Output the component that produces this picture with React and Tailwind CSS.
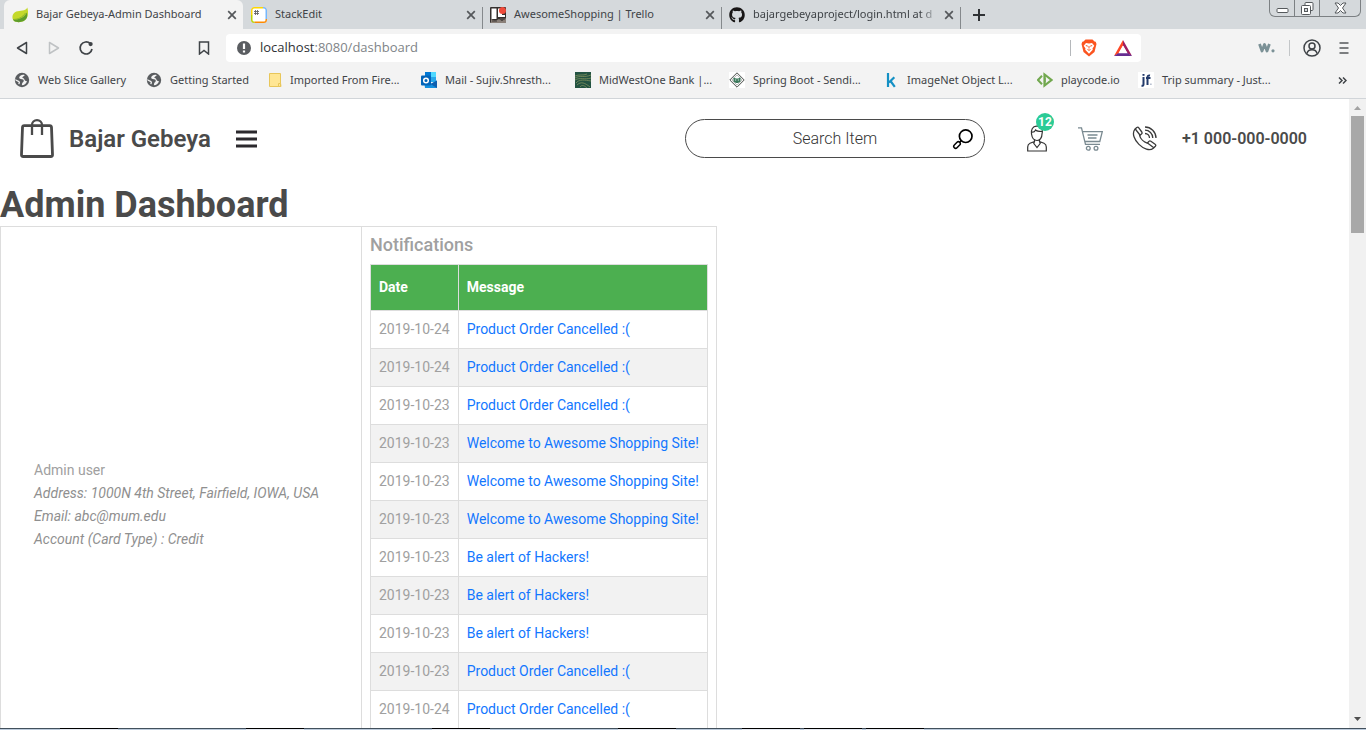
import React from "react";
import { FaGithub } from "react-icons/fa";

const TABS = [
  { title: "Bajar Gebeya-Admin Dashboard", icon: LeafIcon, active: true },
  { title: "StackEdit", icon: StackEditIcon },
  { title: "AwesomeShopping | Trello", icon: TrelloIcon },
  { title: "bajargebeyaproject/login.html at d", icon: GithubIcon, faded: true },
];

const BOOKMARKS = [
  { title: "Web Slice Gallery", icon: GlobeIcon, width: "w-[132px]" },
  { title: "Getting Started", icon: GlobeIcon, width: "w-[120px]" },
  { title: "Imported From Fire...", icon: FolderIcon, width: "w-[155px]" },
  { title: "Mail - Sujiv.Shresth...", icon: OutlookIcon, width: "w-[154px]" },
  { title: "MidWestOne Bank |...", icon: BankIcon, width: "w-[154px]" },
  { title: "Spring Boot - Sendi...", icon: BaeldungIcon, width: "w-[154px]" },
  { title: "ImageNet Object L...", icon: KaggleIcon, width: "w-[154px]" },
  { title: "playcode.io", icon: PlaycodeIcon, width: "w-[101px]" },
  { title: "Trip summary - Just...", icon: JustFlyIcon, width: "w-[150px]" },
];

const CANCELLED = "Product Order Cancelled :(";
const WELCOME = "Welcome to Awesome Shopping Site!";
const ALERT = "Be alert of Hackers!";

const NOTIFICATIONS = [
  ["2019-10-24", CANCELLED],
  ["2019-10-24", CANCELLED],
  ["2019-10-23", CANCELLED],
  ["2019-10-23", WELCOME],
  ["2019-10-23", WELCOME],
  ["2019-10-23", WELCOME],
  ["2019-10-23", ALERT],
  ["2019-10-23", ALERT],
  ["2019-10-23", ALERT],
  ["2019-10-23", CANCELLED],
  ["2019-10-24", CANCELLED],
];

function LeafIcon() {
  return (
    <svg width="16" height="16" viewBox="0 0 16 16" className="shrink-0">
      <path d="M15.3 0.6C14.6 2 13.6 2.9 12 3.2 8 4 3 3.400 1 7.500 -0.300 10.500 0.500 14 4 14.800 8 15.800 12.500 14.600 14.600 11.300 16.500 8 16.300 4 15.300 0.600Z" fill="#c4d92b" />
      <path d="M14.600 11.300C12.500 14.600 8 15.800 4 14.800 2.500 14.500 1.500 13.600 1 12.500 6 12.800 11.500 11.500 14.800 5.500 15.500 8 15.300 10 14.600 11.300Z" fill="#5f9e2b" />
      <path d="M1 12.500C6 12.500 10.500 10.500 13.500 6" fill="none" stroke="#8cb82a" strokeWidth="1" />
    </svg>
  );
}

function StackEditIcon() {
  return (
    <svg width="16" height="16" viewBox="0 0 16 16" className="shrink-0">
      <path d="M1 8V3.500A2.500 2.500 0 0 1 3.500 1H12" fill="none" stroke="#ffd700" strokeWidth="2" />
      <path d="M12 1h0.500A2.500 2.500 0 0 1 15 3.500V12" fill="none" stroke="#75b7fd" strokeWidth="2" />
      <path d="M15 12v0.500A2.500 2.500 0 0 1 12.500 15H3.500" fill="none" stroke="#ff8a00" strokeWidth="2" />
      <path d="M3.500 15A2.500 2.500 0 0 1 1 12.500V8" fill="none" stroke="#bbd500" strokeWidth="2" />
      <rect x="1.500" y="1.500" width="13" height="13" rx="1.500" fill="#fff" />
      <path d="M4.500 3v5M6.500 3v5M3 4.500h5M3 6.500h5" stroke="#666" strokeWidth="0.900" />
    </svg>
  );
}

function TrelloIcon() {
  return (
    <svg width="16" height="16" viewBox="0 0 16 16" className="shrink-0">
      <rect width="16" height="16" rx="1" fill="#35302e" />
      <path d="M1 12l4 2 4-2 3 2 4-3v5H1z" fill="#8a8079" />
      <rect x="1.500" y="1.500" width="5" height="10.500" fill="#fff" />
      <path d="M8 1.500h4V8h3v2H8z" fill="#fff" />
      <path d="M10 12h5M2 14h5" stroke="#5a524d" strokeWidth="1.500" />
      <circle cx="12.500" cy="3.500" r="3.500" fill="#ef4b3b" />
    </svg>
  );
}

function GithubIcon() {
  return <FaGithub size={16} className="shrink-0 text-[#181616]" />;
}

function GlobeIcon() {
  return (
    <svg width="16" height="16" viewBox="0 0 16 16" className="shrink-0">
      <circle cx="8" cy="8" r="7.200" fill="#5a5d60" />
      <path d="M10.800 3.200C8.500 2.300 6 3.300 5.200 5.300 5 6.800 6.500 7.200 8 7.300c1.800 0.200 2.300 1.500 1.300 2.600-1.100 0.800-1.300 1.400-1.400 3.300 2.600-0.100 4.600-1.800 5-4.300-1.200 0.300-2.300-0.500-2.600-1.700-0.200-1-1.200-1.200-2-1.500 0.300-1.200 1.300-1.400 2.500-2.500Z" fill="#f3f3f3" />
      <path d="M1.500 7.500c1 1.600 3 1.300 3.800 2.600 0.200 0.800-0.300 1.300-0.500 2" fill="none" stroke="#f3f3f3" strokeWidth="1.300" />
    </svg>
  );
}

function FolderIcon() {
  return (
    <svg width="16" height="16" viewBox="0 0 16 16" className="shrink-0">
      <path d="M3.500 1.500h11v9.500l0.500 3.500h-11.500z" fill="#ffe694" stroke="#e8c65a" />
      <path d="M12.500 11.500h2v3h-2z" fill="#ffe694" stroke="#e8c65a" />
    </svg>
  );
}

function OutlookIcon() {
  return (
    <svg width="16" height="16" viewBox="0 0 16 16" className="shrink-0">
      <rect x="4" y="0" width="11" height="10" fill="#28a8ea" />
      <rect x="4" y="0" width="6" height="5" fill="#0078d4" />
      <rect x="10" y="0" width="5" height="5" fill="#50d9ff" />
      <path d="M3 8.500l6.500 3.500L16 8.500V16H4z" fill="#1490df" />
      <path d="M9.500 12L16 16V8.500z" fill="#0f5fae" />
      <rect x="0" y="3.500" width="10" height="10" rx="1" fill="#0364b8" />
      <circle cx="5" cy="8.500" r="2.300" fill="none" stroke="#fff" strokeWidth="1.500" />
    </svg>
  );
}

function BankIcon() {
  return (
    <svg width="16" height="16" viewBox="0 0 16 16" className="shrink-0">
      <rect width="16" height="16" fill="#235342" />
      <path d="M0 6c5-3 9 0 16-3M0 8c5-3 10 0 16-2M1 11c3-4 9-3 15-2M2 13c4-4 8-2 13 2M5 15c2-3 5-1 7 1M0 4c4-2 8 0 12-2" fill="none" stroke="#8d9a62" strokeWidth="0.700" />
    </svg>
  );
}

function BaeldungIcon() {
  return (
    <svg width="16" height="16" viewBox="0 0 16 16" className="shrink-0">
      <rect width="16" height="16" fill="#fff" />
      <path d="M8 0.800L15.200 8 8 15.200 0.800 8Z" fill="#fff" stroke="#4b4f4c" strokeWidth="1" />
      <path d="M8 2.800L13.200 8 8 13.200 2.800 8Z" fill="none" stroke="#777" strokeWidth="0.600" />
      <path d="M4.500 5.500L7 6.500h2l2.500-1v4L9 11H7L4.500 9.500Z" fill="#3c7a5c" />
      <path d="M6 8h1.200M8.800 8H10" stroke="#d9e6df" strokeWidth="1" />
    </svg>
  );
}

function KaggleIcon() {
  return (
    <svg width="16" height="16" viewBox="0 0 16 16" className="shrink-0">
      <path d="M5 1v14M11.300 5.200L6 10.500M7.500 9l4.300 5.800" fill="none" stroke="#1490c4" strokeWidth="2.200" />
    </svg>
  );
}

function PlaycodeIcon() {
  return (
    <svg width="16" height="16" viewBox="0 0 16 16" className="shrink-0">
      <path d="M5 3.800L1 8l4 4.200" fill="none" stroke="#72a84f" strokeWidth="2" />
      <path d="M7.500 2.500v11L14.500 8Z" fill="none" stroke="#72a84f" strokeWidth="2.200" />
      <path d="M8 5.500v5" stroke="#72a84f" strokeWidth="1.500" />
    </svg>
  );
}

function JustFlyIcon() {
  return (
    <svg width="16" height="16" viewBox="0 0 16 16" className="shrink-0">
      <rect width="16" height="16" fill="#fff" />
      <path d="M5.500 5v7.500q0 1.500-2 1.300M8 6h4.500M9.500 13V5.500q0-2.500 2.500-2" fill="none" stroke="#223a6b" strokeWidth="2" />
      <rect x="4.500" y="2" width="2" height="1.800" fill="#223a6b" />
      <rect x="12.300" y="11.500" width="1.200" height="1.500" fill="#9aa6bd" />
    </svg>
  );
}

function CloseIcon() {
  return (
    <svg width="10" height="10" viewBox="0 0 10 10" className="shrink-0">
      <path d="M1.200 1.200l7.600 7.600M8.800 1.200L1.200 8.800" stroke="#55585b" strokeWidth="1.700" />
    </svg>
  );
}

function Tab({ title, icon: Icon, active, faded }) {
  return (
    <div
      className={
        "flex h-[29px] w-[239px] items-center pl-2 " +
        (active ? "rounded-t-md bg-[#f3f3f3]" : "")
      }
    >
      <Icon />
      <span
        className={
          "ml-2 w-[186px] whitespace-nowrap text-[#3f4347] " +
          (faded ? "mask-r-from-90% mask-r-to-100%" : "")
        }
      >
        {title}
      </span>
      <button aria-label={"Close " + title} className="ml-[5px]">
        <CloseIcon />
      </button>
      {!active && <span className="-mr-px ml-auto mt-auto h-[22px] w-px bg-[#85898c]" />}
    </div>
  );
}

function WindowControls() {
  return (
    <div className="ml-auto mr-[5px] flex h-[17px] self-start rounded-b-md border border-t-0 border-[#7c8083]">
      <button aria-label="Minimize" className="flex w-[25px] items-center justify-center border-r border-[#7c8083]">
        <svg width="13" height="13" viewBox="0 0 13 13">
          <rect x="1" y="6.500" width="11" height="4" rx="1" fill="#fff" stroke="#55595c" />
        </svg>
      </button>
      <button aria-label="Restore" className="flex w-[25px] items-center justify-center border-r border-[#7c8083]">
        <svg width="13" height="13" viewBox="0 0 13 13">
          <rect x="4" y="0.500" width="8" height="8" rx="1" fill="#fff" stroke="#55595c" />
          <rect x="0.500" y="3.500" width="9" height="9" rx="1" fill="#fff" stroke="#55595c" />
          <rect x="3.500" y="6.500" width="3" height="3" fill="#d5d9dc" stroke="#55595c" />
        </svg>
      </button>
      <button aria-label="Close window" className="flex w-[40px] items-center justify-center">
        <svg width="13" height="12" viewBox="0 0 13 12">
          <path d="M1 1h3l2.500 2.500L9 1h3L8.500 6l3.500 5H9L6.500 8.500 4 11H1l3.500-5Z" fill="#fff" stroke="#55595c" />
        </svg>
      </button>
    </div>
  );
}

function Toolbar() {
  return (
    <div className="flex h-[38px] items-center">
      <nav aria-label="Browser" className="flex w-[226px] items-center pl-[15px]">
        <button aria-label="Back">
          <svg width="14" height="16" viewBox="0 0 14 16">
            <path d="M11.500 2.500v11L2.500 8Z" fill="none" stroke="#3f4347" strokeWidth="1.500" strokeLinejoin="round" />
          </svg>
        </button>
        <button aria-label="Forward" className="ml-[18px]">
          <svg width="14" height="16" viewBox="0 0 14 16">
            <path d="M2.500 2.500v11L11.500 8Z" fill="none" stroke="#bfc2c4" strokeWidth="1.500" strokeLinejoin="round" />
          </svg>
        </button>
        <button aria-label="Reload" className="ml-[17px]">
          <svg width="16" height="16" viewBox="0 0 16 16">
            <path d="M12.300 3.700A6 6 0 1 0 14 9" fill="none" stroke="#3f4347" strokeWidth="1.700" />
            <circle cx="12.600" cy="4.100" r="2.100" fill="#3f4347" />
          </svg>
        </button>
        <button aria-label="Bookmark this page" className="ml-auto mr-4">
          <svg width="12" height="14" viewBox="0 0 12 14">
            <path d="M1.500 1h9v12L6 9.500 1.500 13Z" fill="none" stroke="#3f4347" strokeWidth="1.500" />
          </svg>
        </button>
      </nav>
      <div className="flex h-7 flex-1 items-center rounded bg-white pl-[11px] pr-[9px]">
        <svg width="14" height="14" viewBox="0 0 14 14" className="shrink-0">
          <circle cx="7" cy="7" r="7" fill="#5a5d61" />
          <path d="M7 2.500v5.500M7 9.500v2" stroke="#fff" strokeWidth="2.200" />
        </svg>
        <p className="ml-[9px] flex-1 font-['Open_Sans',sans-serif] text-[13px] text-[#808488]">
          <span className="text-[#2f3235]">localhost</span>:8080/dashboard
        </p>
        <span className="h-4 w-px bg-[#b5b8bb]" />
        <button aria-label="Brave shields" className="ml-[10px]">
          <svg width="16" height="18" viewBox="0 0 16 18">
            <path d="M4.500 0.500h7L13.500 2.500l1.200 0.200L15.500 5l-2 8L8 17.500 2.500 13l-2-8 0.800-2.300L2.500 2.500Z" fill="#fb5420" />
            <path d="M5 4l3 0.600L11 4l2.300 2.700-1.800 2.800 0.300 1.300L8 14.700l-3.800-3.900 0.300-1.300L2.700 6.700Z" fill="#fff" />
            <path d="M4.800 6.500l2 0.700M11.200 6.500l-2 0.700M8 7v2.500M6.500 10.500L8 11.300l1.500-0.800" fill="none" stroke="#fb5420" strokeWidth="1" />
          </svg>
        </button>
        <button aria-label="Brave rewards" className="ml-[17px]">
          <svg width="18" height="16" viewBox="0 0 18 16">
            <path d="M9 0L0 16 4.500 13.500 9 5.500Z" fill="#ff4724" />
            <path d="M9 0L18 16 13.500 13.500 9 5.500Z" fill="#9e1f63" />
            <path d="M0 16h18L13.500 13H4.500Z" fill="#662d91" />
            <path d="M9 5.500L4.500 13.200h9Z" fill="#fff" />
          </svg>
        </button>
      </div>
      <div className="flex w-[225px] items-center pl-[117px]">
        <button aria-label="Extension" className="h-6">
          <svg width="17" height="10" viewBox="0 0 17 10">
            <path d="M1.500 1L4 8 6.500 1.500 9 8l2.400-7" fill="none" stroke="#7b9196" strokeWidth="2.800" strokeLinejoin="round" />
            <circle cx="15" cy="7.800" r="1.600" fill="#7b9196" />
          </svg>
        </button>
        <span className="ml-[14px] h-4 w-px bg-[#c3c6c8]" />
        <button aria-label="Profile" className="ml-[13px]">
          <svg width="18" height="18" viewBox="0 0 18 18" fill="none" stroke="#3f4347" strokeWidth="1.500">
            <circle cx="9" cy="9" r="8" />
            <circle cx="9" cy="7" r="3" />
            <path d="M4 14.500c0.500-2.500 2.500-3.700 5-3.700s4.500 1.200 5 3.700" />
          </svg>
        </button>
        <button aria-label="Menu" className="ml-[18px]">
          <svg width="10" height="12" viewBox="0 0 10 12">
            <path d="M0.500 1h9M0.500 6h9M0.500 11h9" stroke="#55585b" strokeWidth="1.700" />
          </svg>
        </button>
      </div>
    </div>
  );
}

function BookmarksBar() {
  return (
    <nav aria-label="Bookmarks" className="flex h-[32px] items-center border-b border-[#d1d5d9] pb-[5px] pl-[14px]">
      {BOOKMARKS.map(({ title, icon: Icon, width }) => (
        <a key={title} href="#bookmark" className={"flex shrink-0 items-center gap-2 whitespace-nowrap text-[#3f4347] " + width}>
          <Icon />
          {title}
        </a>
      ))}
      <button aria-label="More bookmarks" className="ml-auto mr-[19px]">
        <svg width="9" height="7" viewBox="0 0 9 7">
          <path d="M1 0.500l3 3-3 3M5 0.500l3 3-3 3" fill="none" stroke="#3f4347" strokeWidth="1.500" />
        </svg>
      </button>
    </nav>
  );
}

function SiteHeader() {
  return (
    <header className="flex h-[79px] items-center pl-5 pr-[42px] text-[#4a4a4a]">
      <a href="#home" className="flex items-center gap-[15px] text-2xl font-semibold">
        <svg width="34" height="39" viewBox="0 0 34 39" fill="none" stroke="#4a4a4a" strokeWidth="2.800">
          <path d="M4.300 6.600h25.400q1.700 0 1.800 1.700L32.500 35.500q0.100 2-1.700 2H3.200q-1.800 0-1.700-2L2.500 8.300q0.100-1.700 1.800-1.700Z" />
          <path d="M12 16V6a5 4.800 0 0 1 10 0V16" strokeWidth="2.300" />
        </svg>
        Bajar Gebeya
      </a>
      <button aria-label="Open menu" className="ml-[25px]">
        <svg width="21" height="18" viewBox="0 0 21 18">
          <path d="M0 2h21M0 9h21M0 16h21" stroke="#2b292d" strokeWidth="3" />
        </svg>
      </button>
      <form role="search" className="ml-auto flex h-[39px] w-[300px] items-center rounded-full border border-[#4a4a4a] px-[10px]">
        <input
          type="text"
          aria-label="Search Item"
          placeholder="Search Item"
          className="ml-[22px] min-w-0 flex-1 bg-transparent text-center text-base font-light outline-none placeholder:text-[#333333]"
        />
        <button type="button" aria-label="Search">
          <svg width="22" height="22" viewBox="0 0 22 22" fill="none" stroke="#000">
            <circle cx="13.700" cy="8.200" r="6.300" strokeWidth="1.700" />
            <path d="M9.300 12.700L7.500 14.500" strokeWidth="1.700" />
            <rect x="-1.900" y="-3.800" width="3.800" height="7.600" rx="1.900" strokeWidth="1.500" transform="translate(5 17) rotate(45)" />
          </svg>
        </button>
      </form>
      <a href="#account" aria-label="Account" className="relative ml-[42px]">
        <svg width="20" height="27" viewBox="0 0 20 27" fill="none" stroke="#333" strokeWidth="1.200">
          <path d="M4.500 9C4 4.500 5.500 1.500 9.500 1.200c4-0.200 6 2.300 5.900 5.300L15 9c0 3.500-2 6.500-5 6.500S5 12.500 4.500 9Z" />
          <path d="M5 7c2.500 0.300 3-1 3.500-2 1.500 1.500 4 1.500 6.500 1.500" />
          <path d="M7.500 14.500v2L3 18.200Q0.700 19.200 0.700 22v4h18.600v-4q0-2.800-2.300-3.800l-4.500-1.700v-2M7.500 16.500L6.800 18.500 10 22.500l3.200-4-0.700-2" />
        </svg>
        <span className="absolute -top-[12px] left-[9px] flex size-[18px] items-center justify-center rounded-full bg-[#2bcb96] text-xs font-bold text-white">
          12
        </span>
      </a>
      <a href="#cart" aria-label="Cart" className="ml-[31px]">
        <svg width="25" height="24" viewBox="0 0 25 24" fill="none" stroke="#7a8a91" strokeWidth="1.300">
          <path d="M0 0.800h3.500L7.500 17.300H22M4.500 4.700H24.300L21.800 14.500H7M9.500 8h10M10 11h8.500" />
          <circle cx="10.300" cy="21.300" r="1.900" />
          <circle cx="18" cy="21.300" r="1.900" />
        </svg>
      </a>
      <a href="tel:+10000000000" className="ml-[29px] flex items-center gap-[25px] text-base font-semibold">
        <svg width="25" height="25" viewBox="0 0 25 25" fill="none" stroke="#3b3b3b" strokeWidth="1.300" strokeLinejoin="round">
          <path d="M2.800 3.300L4.800 1.500q1.200-0.800 2 0.300l3 4.200q0.700 1.200-0.300 2L7.600 9.500c0.800 3.200 4.200 6.600 7.600 7.700l1.700-1.800q0.900-0.900 2-0.200l4.200 3q1.200 0.900 0.300 2L21.300 22.300C14 28.500-3.500 12 2.800 3.300Z" />
          <path d="M3.300 3l5 6.500M15.500 17l6.300 4.800" />
          <path d="M13 1c6 0 11 5 11 11M13 4.200c4.300 0 7.800 3.500 7.800 7.800M13 7.500c2.500 0 4.500 2 4.500 4.500" />
        </svg>
        +1 000-000-0000
      </a>
    </header>
  );
}

function ProfilePane() {
  return (
    <section aria-label="Profile" className="flex w-[361px] items-center border-r border-[#dddddd] pl-[33px] leading-[23px]">
      <div>
        <p>Admin user</p>
        <address className="whitespace-nowrap text-[#8f8f8f]">
          Address: 1000N 4th Street, Fairfield, IOWA, USA
          <br />
          Email: abc@mum.edu
          <br />
          Account (Card Type) : Credit
        </address>
      </div>
    </section>
  );
}

function NotificationsPane() {
  return (
    <section className="px-2 pb-[54px] pt-[5px]">
      <h2 className="mb-[6px] text-lg leading-[26px] font-medium">Notifications</h2>
      <table className="border-collapse leading-[21px]">
        <thead>
          <tr className="bg-[#4caf50] text-left text-white">
            <th className="border border-[#dddddd] px-2 py-3 font-bold">Date</th>
            <th className="border border-[#dddddd] px-2 py-3 font-bold">Message</th>
          </tr>
        </thead>
        <tbody>
          {NOTIFICATIONS.map(([date, message], i) => (
            <tr key={i} className="even:bg-[#f2f2f2]">
              <td className="border border-[#dddddd] p-2 whitespace-nowrap">{date}</td>
              <td className="border border-[#dddddd] p-2 whitespace-nowrap">
                <a href="#notification" className="text-[#1277ff]">{message}</a>
              </td>
            </tr>
          ))}
        </tbody>
      </table>
    </section>
  );
}

function ScrollBar() {
  return (
    <div aria-hidden="true" className="flex w-[17px] shrink-0 flex-col items-center bg-[#f1f1f1]">
      <svg width="17" height="17" viewBox="0 0 17 17">
        <path d="M5 11h7L8.500 7Z" fill="#a3a3a3" />
      </svg>
      <div className="h-[117px] w-[13px] bg-[#a8a8a8]" />
      <svg width="17" height="17" viewBox="0 0 17 17" className="mt-auto">
        <path d="M5 6h7L8.500 10Z" fill="#505050" />
      </svg>
    </div>
  );
}

function Taskbar() {
  return (
    <footer className="h-[2px] shrink-0 border-t border-[#42505c] bg-[#bccbdc]">
      <svg width="930" height="2" viewBox="0 0 930 2" className="-mt-px block">
        <path d="M60 0.500h58M246 0.500h58M432 0.500h58M618 0.500h58M742 0.500h58M804 0.500h58M866 0.500h58" stroke="#000" />
        <path d="M60 1.500h58M246 1.500h58M432 1.500h58M618 1.500h58M742 1.500h58M804 1.500h58M866 1.500h58" stroke="#e6eaf2" />
      </svg>
    </footer>
  );
}

export default function App() {
  return (
    <div className="flex h-screen flex-col overflow-hidden bg-white">
      <div className="shrink-0 bg-[#f3f3f3] font-['Noto_Sans',sans-serif] text-[11px]">
        <div className="flex h-[29px] items-center bg-[#d5d9dc] pl-1">
          {TABS.map((tab) => (
            <Tab key={tab.title} {...tab} />
          ))}
          <button aria-label="New tab" className="ml-[13px]">
            <svg width="12" height="12" viewBox="0 0 12 12">
              <path d="M6 0v12M0 6h12" stroke="#2f3235" strokeWidth="2" />
            </svg>
          </button>
          <WindowControls />
        </div>
        <Toolbar />
        <BookmarksBar />
      </div>
      <div className="flex min-h-0 flex-1">
        <main className="min-w-0 flex-1 overflow-hidden font-[Roboto,sans-serif] text-sm text-[#a0a0a0]">
          <SiteHeader />
          <h1 className="pt-[6px] text-4xl leading-[42px] font-bold text-[#4a4a4a]">Admin Dashboard</h1>
          <div className="flex w-fit border border-[#dddddd]">
            <ProfilePane />
            <NotificationsPane />
          </div>
        </main>
        <ScrollBar />
      </div>
      <Taskbar />
    </div>
  );
}
